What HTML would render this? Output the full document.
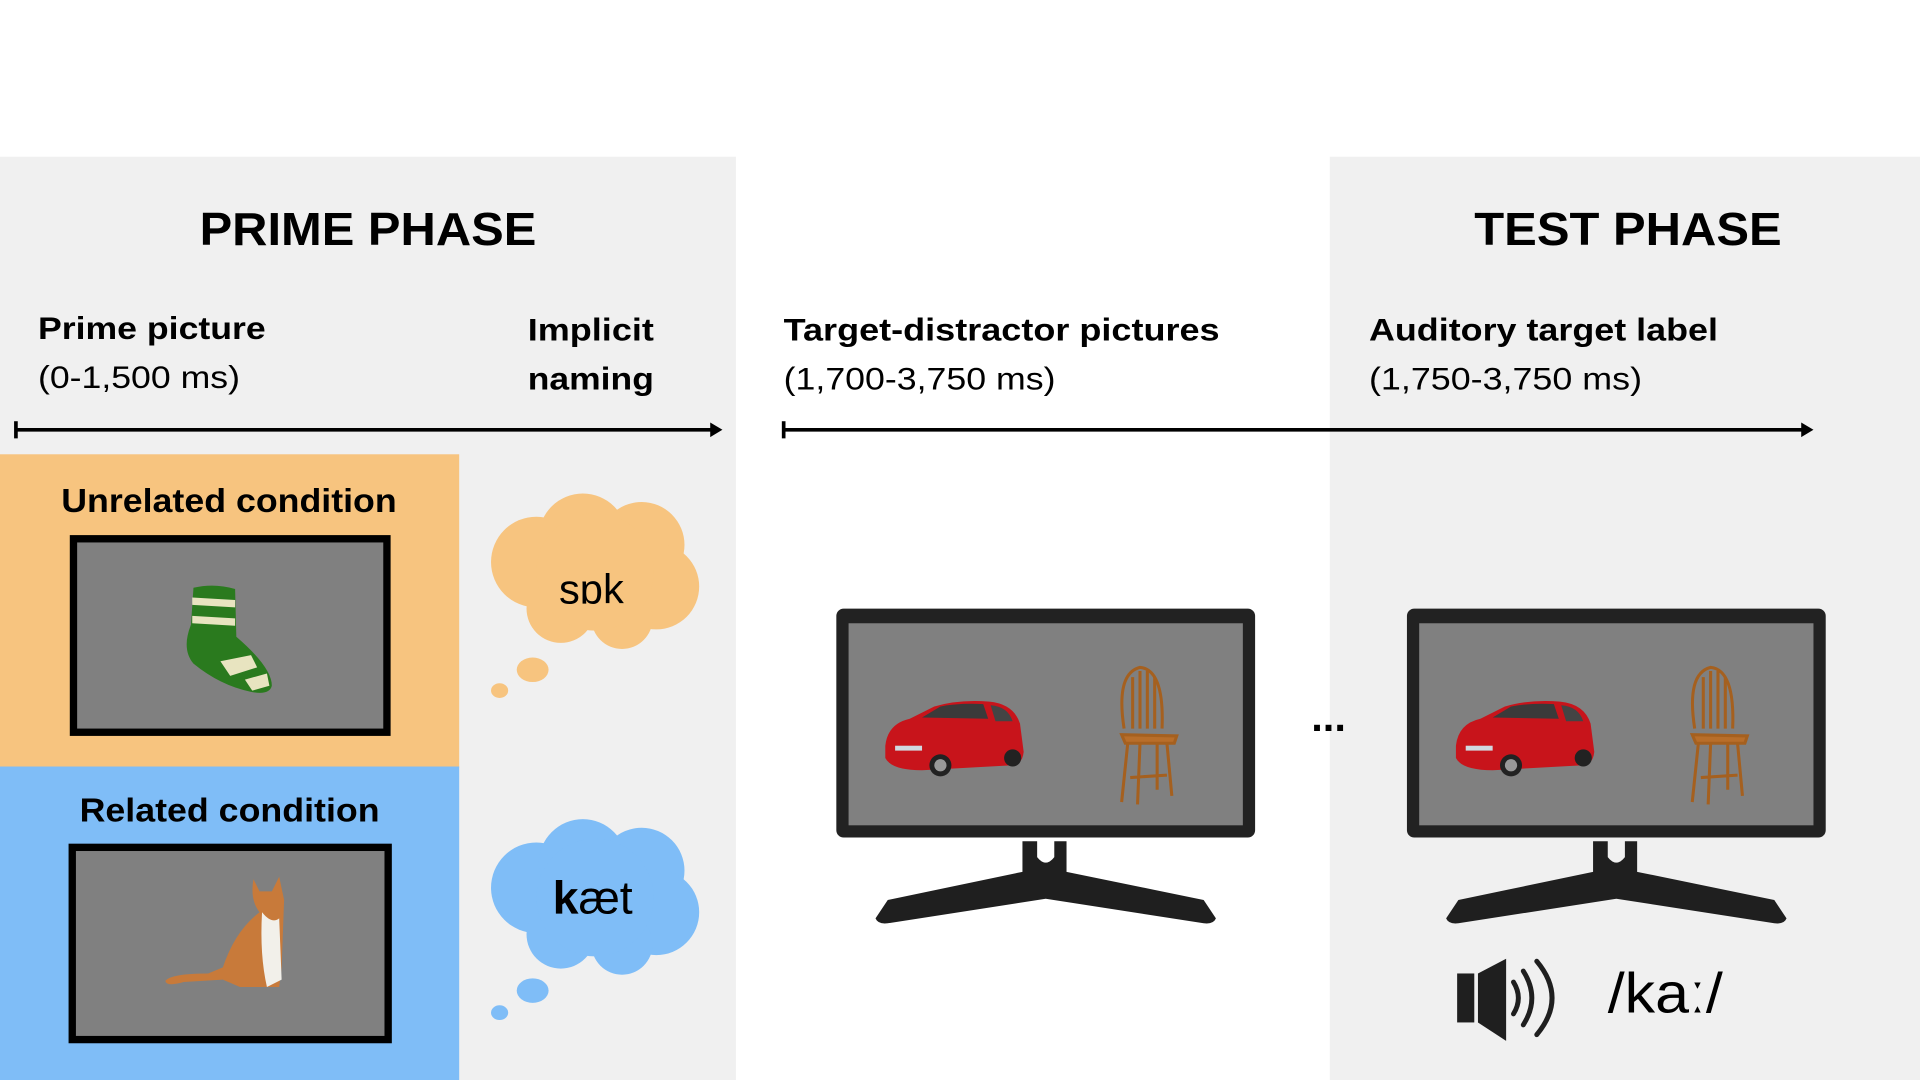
<!DOCTYPE html>
<html><head><meta charset="utf-8"><style>
html,body{margin:0;padding:0;background:#fff;width:1920px;height:1080px;overflow:hidden}
svg{display:block}
text{font-family:"Liberation Sans",Arial,sans-serif}
</style></head><body>
<svg width="1920" height="1080" viewBox="0 0 1568 882" xmlns="http://www.w3.org/2000/svg">
<defs>
<g id="cloud">
  <circle cx="-48" cy="-8" r="37"/><circle cx="-10" cy="-28" r="36"/><circle cx="38" cy="-22" r="35"/>
  <circle cx="50" cy="12" r="35"/><circle cx="22" cy="38" r="25"/><circle cx="-28" cy="30" r="28"/>
  <circle cx="0" cy="0" r="48"/>
</g>
<g id="car">
  <path d="M0,40 Q2,22 20,18 L40,8 Q60,2 85,4 Q105,6 110,22 L113,45 Q112,55 104,56 L30,60 Q5,60 0,50 Z" fill="#c8141b"/>
  <path d="M30,17 L45,8 Q60,5 80,6 L84,18 Z" fill="#3a3a3a"/>
  <path d="M86,7 Q100,8 104,20 L90,20 Z" fill="#444"/>
  <rect x="8" y="40" width="22" height="4" fill="#d0d8e0"/>
  <circle cx="45" cy="56" r="9" fill="#222"/><circle cx="45" cy="56" r="5" fill="#999"/>
  <circle cx="104" cy="50" r="7" fill="#222"/>
</g>
<g id="chair" stroke="#a5601f" fill="none" stroke-width="2.5">
  <path d="M5,50 Q-2,5 18,0 Q38,2 36,50"/>
  <path d="M12,50 L12,8 M18,50 L18,3 M24,50 L24,3 M30,50 L30,8"/>
  <path d="M3,55 L48,56 L46,62 L6,62 Z" fill="#b86e2a"/>
  <path d="M8,62 L3,110 M18,62 L16,112 M40,62 L44,105 M32,62 L32,100 M10,90 L40,88"/>
</g>
<g id="monitor">
  <rect x="0" y="0" width="342" height="187" rx="6" fill="#222"/>
  <rect x="10" y="12" width="322" height="165" fill="#808080"/>
  <path d="M152,190 L164,190 L164,203 Q171,212 178,203 L178,190 L188,190 L188,215 L300,238 L310,253 Q308,258 300,257 L171,237 L42,257 Q34,258 32,253 L42,238 L152,215 Z" fill="#1f1f1f"/>
  <use href="#car" x="40" y="72"/>
  <use href="#chair" x="230" y="48"/>
</g>
</defs>
<rect width="1568" height="882" fill="#fff"/>
<rect x="0" y="128" width="601" height="754" fill="#f0f0f0"/>
<rect x="1086" y="128" width="482" height="754" fill="#f0f0f0"/>
<rect x="0" y="371" width="375" height="256" fill="#f7c47f"/>
<rect x="0" y="626" width="375" height="256" fill="#7fbdf7"/>

<text x="163" y="200" font-size="38" font-weight="bold" textLength="275" lengthAdjust="spacingAndGlyphs">PRIME PHASE</text>
<text x="1204" y="200" font-size="38" font-weight="bold" textLength="251" lengthAdjust="spacingAndGlyphs">TEST PHASE</text>

<g font-size="26">
<text x="31" y="277" font-weight="bold" textLength="186" lengthAdjust="spacingAndGlyphs">Prime picture</text>
<text x="31" y="317" textLength="165" lengthAdjust="spacingAndGlyphs">(0-1,500 ms)</text>
<text x="431" y="278" font-weight="bold" textLength="103" lengthAdjust="spacingAndGlyphs">Implicit</text>
<text x="431" y="318" font-weight="bold" textLength="103" lengthAdjust="spacingAndGlyphs">naming</text>
<text x="640" y="278" font-weight="bold" textLength="356" lengthAdjust="spacingAndGlyphs">Target-distractor pictures</text>
<text x="640" y="318" textLength="222" lengthAdjust="spacingAndGlyphs">(1,700-3,750 ms)</text>
<text x="1118" y="278" font-weight="bold" textLength="285" lengthAdjust="spacingAndGlyphs">Auditory target label</text>
<text x="1118" y="318" textLength="223" lengthAdjust="spacingAndGlyphs">(1,750-3,750 ms)</text>
</g>

<g stroke="#000" stroke-width="3">
<line x1="13" y1="351" x2="582" y2="351"/><line x1="13" y1="344" x2="13" y2="358"/>
<line x1="640" y1="351" x2="1473" y2="351"/><line x1="640" y1="344" x2="640" y2="358"/>
</g>
<path d="M580,345 L590,351 L580,357 Z"/><path d="M1471,345 L1481,351 L1471,357 Z"/>

<text x="50" y="418" font-size="27" font-weight="bold" textLength="274" lengthAdjust="spacingAndGlyphs">Unrelated condition</text>
<text x="65" y="671" font-size="27" font-weight="bold" textLength="245" lengthAdjust="spacingAndGlyphs">Related condition</text>

<rect x="60" y="440" width="256" height="158" fill="#808080" stroke="#000" stroke-width="6"/>
<rect x="59" y="692" width="258" height="157" fill="#808080" stroke="#000" stroke-width="6"/>

<!-- sock -->
<g>
<path d="M158,480 Q175,476 192,481 L193,520 Q222,545 222,560 Q220,568 205,565 Q180,560 158,542 Q148,530 156,510 Z" fill="#2a7a1e"/>
<path d="M157,488 L192,490 L192,496 L157,494 Z M157,503 L192,505 L192,511 L157,509 Z M180,540 L205,535 L210,545 L188,552 Z M200,555 L218,550 L220,560 L206,564 Z" fill="#e8e4c0"/>
</g>
<!-- cat -->
<g>
<path d="M207,718 L212,728 L222,728 L228,716 L232,735 L230,790 L228,806 L196,806 L182,800 L150,802 Q136,806 135,801 Q140,795 170,795 L182,790 Q192,760 212,745 Q204,735 207,718 Z" fill="#c87a3a"/>
<path d="M214,745 Q222,755 228,750 L230,800 L218,806 Q212,780 214,745 Z" fill="#f2f0ea"/>
</g>

<g fill="#f7c47f"><use href="#cloud" x="486" y="467"/><ellipse cx="435" cy="547" rx="13" ry="10"/><ellipse cx="408" cy="564" rx="7" ry="6"/></g>
<g fill="#7fbdf7"><use href="#cloud" x="486" y="733"/><ellipse cx="435" cy="809" rx="13" ry="10"/><ellipse cx="408" cy="827" rx="7" ry="6"/></g>
<text x="483" y="493" font-size="34" text-anchor="middle">sɒk</text>
<text x="484" y="746" font-size="38" text-anchor="middle"><tspan font-weight="bold">k</tspan>æt</text>

<use href="#monitor" x="683" y="497"/>
<use href="#monitor" x="1149" y="497"/>

<text x="1085" y="597" font-size="34" font-weight="bold" text-anchor="middle">...</text>

<!-- speaker -->
<rect x="1190" y="795" width="14" height="40" fill="#1f1f1f"/>
<path d="M1207,795 L1230,783 L1230,850 L1207,835 Z" fill="#1f1f1f"/>
<g fill="none" stroke="#1f1f1f" stroke-width="4" stroke-linecap="round">
<path d="M1236,802 Q1244,815 1236,828"/>
<path d="M1244,793 Q1258,815 1244,837"/>
<path d="M1255,785 Q1280,815 1255,845"/>
</g>
<text x="1313" y="827" font-size="46" textLength="94" lengthAdjust="spacingAndGlyphs">/kaː/</text>
</svg>
</body></html>
